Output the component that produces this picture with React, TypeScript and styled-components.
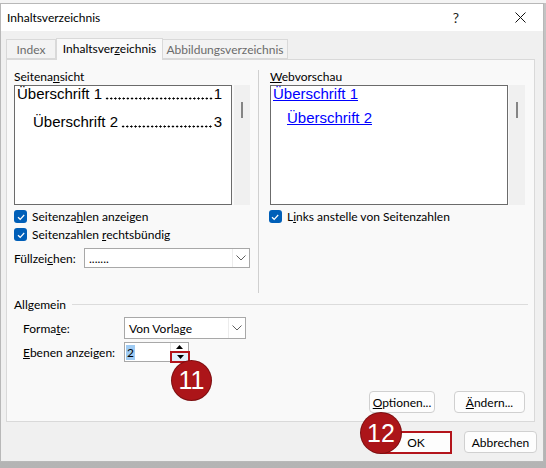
import React from "react";
import styled, { createGlobalStyle } from "styled-components";

const Global = createGlobalStyle`
  html, body { margin: 0; padding: 0; }
  body {
    width: 546px;
    height: 468px;
    overflow: hidden;
    background: linear-gradient(to bottom, #f4f4f4 0, #f4f4f4 3px, #c4c4c4 3px, #b4b4b4 100%);
    font-family: "Segoe UI", Lato, "Noto Sans", sans-serif;
    font-size: 12px;
    color: #000;
  }
`;

const Dialog = styled.div`
  margin-top: 3px;
  width: 544px;
  box-sizing: border-box;
  border: 1px solid #b8b8b8;
  background: #f0f0f0;
  display: flex;
  flex-direction: column;
`;

const TitleBar = styled.div`
  height: 27px;
  background: #fff;
  display: flex;
  align-items: center;
  padding-left: 6px;
`;

const Title = styled.div`
  flex: 1;
  font-size: 12px;
`;

const TitleButton = styled.div<{ $w: number }>`
  width: ${(p) => p.$w}px;
  height: 27px;
  display: flex;
  align-items: center;
  justify-content: center;
  font-size: 14px;
  color: #222;
`;

const Body = styled.div`
  padding: 7px 8px 7px 5px;
  display: flex;
  flex-direction: column;
`;

const TabRow = styled.div`
  display: flex;
  align-items: flex-end;
  height: 21px;
  position: relative;
  z-index: 1;
`;

const Tab = styled.div<{ $w: number; $active?: boolean }>`
  width: ${(p) => p.$w}px;
  height: ${(p) => (p.$active ? 22 : 20)}px;
  box-sizing: border-box;
  margin-bottom: ${(p) => (p.$active ? -1 : 0)}px;
  border: 1px solid #d9d9d9;
  border-bottom: ${(p) => (p.$active ? "none" : "1px solid #d9d9d9")};
  margin-left: ${(p) => (p.$active ? 0 : -1)}px;
  background: ${(p) => (p.$active ? "#f9f9f9" : "#f3f3f3")};
  color: ${(p) => (p.$active ? "#000" : "#6b6b6b")};
  display: flex;
  align-items: center;
  justify-content: center;
  padding-bottom: ${(p) => (p.$active ? 2 : 0)}px;
  &:first-child { margin-left: 0; }
`;

const Panel = styled.div`
  height: 363px;
  box-sizing: border-box;
  border: 1px solid #d9d9d9;
  background: #f9f9f9;
  display: flex;
  flex-direction: column;
  padding: 10px 9px 8px 7px;
`;

const TopSection = styled.div`
  display: flex;
  height: 223px;
`;

const Column = styled.div<{ $w: number }>`
  width: ${(p) => p.$w}px;
  display: flex;
  flex-direction: column;
`;

const Separator = styled.div`
  width: 1px;
  background: #d0d0d0;
  margin: 0 11px 0 8px;
`;

const Label = styled.div`
  height: 13px;
  line-height: 13px;
  margin-bottom: 2px;
  white-space: nowrap;
`;

const Key = styled.span`
  text-decoration: underline;
  text-underline-offset: 1px;
`;

const PreviewRow = styled.div`
  display: flex;
  height: 120px;
`;

const PreviewBox = styled.div<{ $gap: number }>`
  flex: 1;
  min-width: 0;
  box-sizing: border-box;
  border: 1px solid #6b6b6b;
  background: #fff;
  margin-right: ${(p) => p.$gap}px;
  padding: 0 9px 0 2px;
  font-family: "Liberation Sans", Arial, sans-serif;
  font-size: 15px;
  overflow: hidden;
`;

const Scrollbar = styled.div`
  width: 16px;
  background: #f0f0f0;
  position: relative;
`;

const Thumb = styled.div`
  position: absolute;
  left: 7px;
  top: 17px;
  width: 2px;
  height: 16px;
  background: #858585;
`;

const TocLine = styled.div<{ $indent: number }>`
  display: flex;
  height: 15px;
  line-height: 15px;
  padding-left: ${(p) => p.$indent}px;
  margin-bottom: ${(p) => (p.$indent ? 0 : 13)}px;
  white-space: nowrap;
`;

/* dotted tab leader between heading and page number */
const Leader = styled.span`
  flex: 1;
  min-width: 0;
  margin: 0 1px 0 3px;
  background-image: radial-gradient(circle, #000 0.9px, transparent 1.2px);
  background-size: 4.17px 3px;
  background-repeat: repeat-x;
  background-position: 0 11px;
`;

const WebLink = styled.div<{ $indent: number }>`
  color: #0000ff;
  text-decoration: underline;
  height: 15px;
  line-height: 15px;
  padding-left: ${(p) => p.$indent}px;
  margin-bottom: ${(p) => (p.$indent ? 0 : 9)}px;
  white-space: nowrap;
`;

const CheckRow = styled.div<{ $shift?: number }>`
  display: flex;
  align-items: center;
  gap: 5px;
  height: 13px;
  margin-top: 5px;
  margin-left: ${(p) => p.$shift ?? 0}px;
  white-space: nowrap;
`;

const CheckBox = styled.div`
  width: 13px;
  height: 13px;
  border-radius: 3px;
  background: #005fb8;
  display: flex;
  align-items: center;
  justify-content: center;
`;

const FieldRow = styled.div<{ $top: number; $indent?: number }>`
  display: flex;
  align-items: center;
  margin-top: ${(p) => p.$top}px;
  padding-left: ${(p) => p.$indent ?? 0}px;
`;

const FieldLabel = styled.div<{ $w: number }>`
  width: ${(p) => p.$w}px;
  white-space: nowrap;
`;

const Select = styled.div<{ $w: number; $h: number }>`
  width: ${(p) => p.$w}px;
  height: ${(p) => p.$h}px;
  box-sizing: border-box;
  border: 1px solid #a8a8a8;
  background: #fff;
  display: flex;
  align-items: center;
`;

const SelectValue = styled.div`
  flex: 1;
  padding-left: 4px;
  white-space: nowrap;
`;

const ChevronBox = styled.div`
  width: 16px;
  align-self: stretch;
  border-left: 1px solid #ececec;
  display: flex;
  align-items: center;
  justify-content: center;
`;

const GroupHeader = styled.div`
  display: flex;
  align-items: center;
  height: 14px;
  margin-top: 4px;
  margin-right: -3px;
`;

const GroupLine = styled.div`
  flex: 1;
  height: 1px;
  background: #dcdcdc;
  margin-left: 6px;
`;

const Spinner = styled.div`
  position: relative;
  width: 65px;
  height: 20px;
  box-sizing: border-box;
  border: 1px solid #a8a8a8;
  background: #fff;
  display: flex;
`;

const SpinValue = styled.div`
  flex: 1;
  display: flex;
  align-items: center;
  padding-left: 1px;
`;

const Selected = styled.span`
  background: #9fcbf3;
  padding: 0 1px;
  line-height: 15px;
`;

const SpinButtons = styled.div`
  width: 17px;
  display: flex;
  flex-direction: column;
  border-left: 1px solid #e4e4e4;
`;

const SpinButton = styled.div<{ $marked?: boolean }>`
  flex: 1;
  display: flex;
  align-items: center;
  justify-content: center;
  box-sizing: border-box;
  background: ${(p) => (p.$marked ? "#e1effb" : "#fff")};
  border: ${(p) => (p.$marked ? "2px solid #b3141b" : "none")};
  margin: ${(p) => (p.$marked ? "-1px -2px -2px -1px" : "0")};
`;

const Badge = styled.div<{ $left: number; $top: number; $size: number }>`
  position: absolute;
  left: ${(p) => p.$left}px;
  top: ${(p) => p.$top}px;
  width: ${(p) => p.$size}px;
  height: ${(p) => p.$size}px;
  border-radius: 50%;
  background: #ac1519;
  box-shadow: 0 0 0 1px #7c0e10;
  color: #fff;
  font-family: "Liberation Sans", Arial, sans-serif;
  font-size: 25px;
  display: flex;
  align-items: center;
  justify-content: center;
  z-index: 2;
`;

const ButtonRow = styled.div<{ $top: string }>`
  display: flex;
  justify-content: flex-end;
  margin-top: ${(p) => p.$top};
`;

const Button = styled.div<{ $w: number; $gap?: number; $marked?: boolean }>`
  position: relative;
  width: ${(p) => p.$w}px;
  height: ${(p) => (p.$marked ? 23 : 22)}px;
  box-sizing: border-box;
  margin-left: ${(p) => p.$gap ?? 0}px;
  border: ${(p) => (p.$marked ? "2px solid #b3141b" : "1px solid #d0d0d0")};
  border-radius: ${(p) => (p.$marked ? 0 : 4)}px;
  background: #fdfdfd;
  display: flex;
  align-items: center;
  justify-content: center;
  white-space: nowrap;
`;

const FooterRow = styled.div`
  display: flex;
  justify-content: flex-end;
  align-items: flex-start;
  margin-top: 9px;
  margin-right: -2px;
`;

const Chevron = () => (
  <svg width="10" height="6" viewBox="0 0 10 6">
    <polyline points="0.5,0.5 5,5 9.5,0.5" fill="none" stroke="#606060" strokeWidth="1" />
  </svg>
);

const Check = () => (
  <svg width="10" height="10" viewBox="0 0 10 10">
    <polyline points="2,5.2 4.2,7.3 8.2,3" fill="none" stroke="#fff" strokeWidth="1.2" />
  </svg>
);

const Arrow = ({ up }: { up?: boolean }) => (
  <svg width="7" height="4" viewBox="0 0 7 4">
    <polygon points={up ? "0,4 3.5,0 7,4" : "0,0 7,0 3.5,4"} fill="#000" />
  </svg>
);

const CloseIcon = () => (
  <svg width="11" height="11" viewBox="0 0 11 11">
    <path d="M0.5 0.5 L10.5 10.5 M10.5 0.5 L0.5 10.5" stroke="#111" strokeWidth="1" />
  </svg>
);

export default function App() {
  return (
    <>
      <Global />
      <Dialog>
        <TitleBar>
          <Title>Inhaltsverzeichnis</Title>
          <TitleButton $w={30}>?</TitleButton>
          <TitleButton $w={26} />
          <TitleButton $w={46}>
            <CloseIcon />
          </TitleButton>
        </TitleBar>
        <Body>
          <TabRow>
            <Tab $w={50}>Index</Tab>
            <Tab $w={107} $active>
              Inhaltsver<Key>z</Key>eichnis
            </Tab>
            <Tab $w={126}>Abbildungsverzeichnis</Tab>
          </TabRow>
          <Panel>
            <TopSection>
              <Column $w={236}>
                <Label>
                  Seitena<Key>n</Key>sicht
                </Label>
                <PreviewRow>
                  <PreviewBox $gap={2}>
                    <TocLine $indent={0}>
                      <span>Überschrift 1</span>
                      <Leader />
                      <span>1</span>
                    </TocLine>
                    <TocLine $indent={16}>
                      <span>Überschrift 2</span>
                      <Leader />
                      <span>3</span>
                    </TocLine>
                  </PreviewBox>
                  <Scrollbar>
                    <Thumb />
                  </Scrollbar>
                </PreviewRow>
                <CheckRow>
                  <CheckBox>
                    <Check />
                  </CheckBox>
                  <span>
                    Seitenza<Key>h</Key>len anzeigen
                  </span>
                </CheckRow>
                <CheckRow>
                  <CheckBox>
                    <Check />
                  </CheckBox>
                  <span>
                    Seitenzahlen <Key>r</Key>echtsbündig
                  </span>
                </CheckRow>
                <FieldRow $top={7}>
                  <FieldLabel $w={70}>
                    Füllzei<Key>c</Key>hen:
                  </FieldLabel>
                  <Select $w={166} $h={20}>
                    <SelectValue>.......</SelectValue>
                    <ChevronBox>
                      <Chevron />
                    </ChevronBox>
                  </Select>
                </FieldRow>
              </Column>
              <Separator />
              <Column $w={258}>
                <Label>
                  <Key>W</Key>ebvorschau
                </Label>
                <PreviewRow>
                  <PreviewBox $gap={1}>
                    <WebLink $indent={0}>Überschrift 1</WebLink>
                    <WebLink $indent={14}>Überschrift 2</WebLink>
                  </PreviewBox>
                  <Scrollbar>
                    <Thumb />
                  </Scrollbar>
                </PreviewRow>
                <CheckRow $shift={-1}>
                  <CheckBox>
                    <Check />
                  </CheckBox>
                  <span>
                    L<Key>i</Key>nks anstelle von Seitenzahlen
                  </span>
                </CheckRow>
              </Column>
            </TopSection>
            <GroupHeader>
              <span>Allgemein</span>
              <GroupLine />
            </GroupHeader>
            <FieldRow $top={6} $indent={9}>
              <FieldLabel $w={101}>
                Forma<Key>t</Key>e:
              </FieldLabel>
              <Select $w={122} $h={22}>
                <SelectValue>Von Vorlage</SelectValue>
                <ChevronBox>
                  <Chevron />
                </ChevronBox>
              </Select>
            </FieldRow>
            <FieldRow $top={3} $indent={9}>
              <FieldLabel $w={101}>
                <Key>E</Key>benen anzeigen:
              </FieldLabel>
              <Spinner>
                <SpinValue>
                  <Selected>2</Selected>
                </SpinValue>
                <SpinButtons>
                  <SpinButton>
                    <Arrow up />
                  </SpinButton>
                  <SpinButton $marked>
                    <Arrow />
                  </SpinButton>
                </SpinButtons>
                <Badge $left={47} $top={18} $size={39}>
                  11
                </Badge>
              </Spinner>
            </FieldRow>
            <ButtonRow $top="auto">
              <Button $w={66}>
                <span>
                  <Key>O</Key>ptionen...
                </span>
              </Button>
              <Button $w={71} $gap={19}>
                <span>
                  <Key>Ä</Key>ndern...
                </span>
              </Button>
            </ButtonRow>
          </Panel>
          <FooterRow>
            <Button $w={72} $marked>
              OK
              <Badge $left={-21} $top={-20} $size={40}>
                12
              </Badge>
            </Button>
            <Button $w={73} $gap={12}>
              Abbrechen
            </Button>
          </FooterRow>
        </Body>
      </Dialog>
    </>
  );
}
